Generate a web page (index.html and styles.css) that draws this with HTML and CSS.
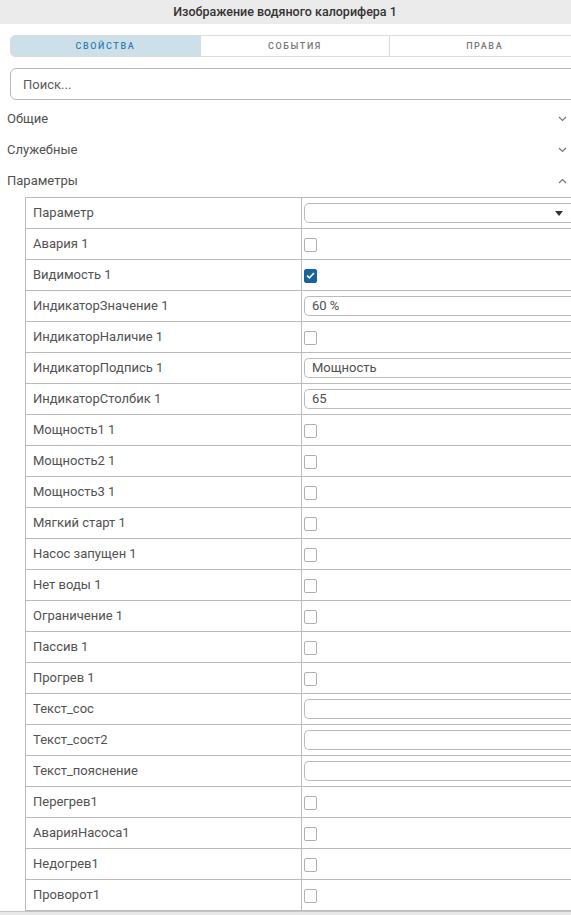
FILE: index.html
```html
<!DOCTYPE html>
<html lang="ru">
<head>
  <meta charset="UTF-8" />
  <meta name="viewport" content="width=device-width, initial-scale=1.0"/>
  <title>Изображение водяного калорифера 1</title>
  <link rel="stylesheet" href="styles.css">
</head>
<body>
  <div class="props-panel">
    <div class="panel-header">Изображение водяного калорифера 1</div>

    <div class="panel-tabs">
      <div class="tab active">Свойства</div>
      <div class="tab">События</div>
      <div class="tab">Права</div>
    </div>

    <div class="search-box">
      <input type="text" placeholder="Поиск..." />
    </div>

    <div class="groups">
      <div class="group">
        <span>Общие</span>
        <svg class="chevron" width="9" height="6" viewBox="0 0 9 6"><polyline points="1,1 4.5,4.5 8,1" /></svg>
      </div>
      <div class="group">
        <span>Служебные</span>
        <svg class="chevron" width="9" height="6" viewBox="0 0 9 6"><polyline points="1,1 4.5,4.5 8,1" /></svg>
      </div>
      <div class="group">
        <span>Параметры</span>
        <svg class="chevron" width="9" height="6" viewBox="0 0 9 6"><polyline points="1,5 4.5,1.5 8,5" /></svg>
      </div>
    </div>

    <div class="param-table">
      <div class="param-row">
        <div class="param-name">Параметр</div>
        <div class="param-value">
          <div class="field select">
            <svg class="caret" width="8" height="5" viewBox="0 0 8 5"><polygon points="0,0 8,0 4,5" /></svg>
          </div>
        </div>
      </div>
      <div class="param-row">
        <div class="param-name">Авария 1</div>
        <div class="param-value"><span class="check"></span></div>
      </div>
      <div class="param-row">
        <div class="param-name">Видимость 1</div>
        <div class="param-value">
          <span class="check checked">
            <svg width="9" height="7" viewBox="0 0 9 7"><polyline points="1,3.6 3.4,5.8 8,1" /></svg>
          </span>
        </div>
      </div>
      <div class="param-row">
        <div class="param-name">ИндикаторЗначение 1</div>
        <div class="param-value"><div class="field">60 %</div></div>
      </div>
      <div class="param-row">
        <div class="param-name">ИндикаторНаличие 1</div>
        <div class="param-value"><span class="check"></span></div>
      </div>
      <div class="param-row">
        <div class="param-name">ИндикаторПодпись 1</div>
        <div class="param-value"><div class="field">Мощность</div></div>
      </div>
      <div class="param-row">
        <div class="param-name">ИндикаторСтолбик 1</div>
        <div class="param-value"><div class="field">65</div></div>
      </div>
      <div class="param-row">
        <div class="param-name">Мощность1 1</div>
        <div class="param-value"><span class="check"></span></div>
      </div>
      <div class="param-row">
        <div class="param-name">Мощность2 1</div>
        <div class="param-value"><span class="check"></span></div>
      </div>
      <div class="param-row">
        <div class="param-name">Мощность3 1</div>
        <div class="param-value"><span class="check"></span></div>
      </div>
      <div class="param-row">
        <div class="param-name">Мягкий старт 1</div>
        <div class="param-value"><span class="check"></span></div>
      </div>
      <div class="param-row">
        <div class="param-name">Насос запущен 1</div>
        <div class="param-value"><span class="check"></span></div>
      </div>
      <div class="param-row">
        <div class="param-name">Нет воды 1</div>
        <div class="param-value"><span class="check"></span></div>
      </div>
      <div class="param-row">
        <div class="param-name">Ограничение 1</div>
        <div class="param-value"><span class="check"></span></div>
      </div>
      <div class="param-row">
        <div class="param-name">Пассив 1</div>
        <div class="param-value"><span class="check"></span></div>
      </div>
      <div class="param-row">
        <div class="param-name">Прогрев 1</div>
        <div class="param-value"><span class="check"></span></div>
      </div>
      <div class="param-row">
        <div class="param-name">Текст_сос</div>
        <div class="param-value"><div class="field"></div></div>
      </div>
      <div class="param-row">
        <div class="param-name">Текст_сост2</div>
        <div class="param-value"><div class="field"></div></div>
      </div>
      <div class="param-row">
        <div class="param-name">Текст_пояснение</div>
        <div class="param-value"><div class="field"></div></div>
      </div>
      <div class="param-row">
        <div class="param-name">Перегрев1</div>
        <div class="param-value"><span class="check"></span></div>
      </div>
      <div class="param-row">
        <div class="param-name">АварияНасоса1</div>
        <div class="param-value"><span class="check"></span></div>
      </div>
      <div class="param-row">
        <div class="param-name">Недогрев1</div>
        <div class="param-value"><span class="check"></span></div>
      </div>
      <div class="param-row">
        <div class="param-name">Проворот1</div>
        <div class="param-value"><span class="check"></span></div>
      </div>
    </div>

    <div class="panel-footer"></div>
  </div>
</body>
</html>
```

FILE: styles.css
```css
html, body {
  margin: 0;
  overflow: hidden;
  background: #fff;
}
body {
  font-family: Roboto, 'Liberation Sans', Arial, sans-serif;
  color: #505050;
}
.props-panel {
  width: 590px;
}
.panel-header {
  height: 24px;
  line-height: 24px;
  background: #ebebeb;
  text-align: center;
  padding-right: 20px;
  font-size: 12.5px;
  font-weight: 500;
  color: #333;
}
.panel-tabs {
  display: flex;
  margin: 11px 10px 0 10px;
  height: 20px;
  border: 1px solid #dcdcdc;
  border-radius: 5px 0 0 5px;
  overflow: hidden;
}
.tab {
  flex: 1;
  text-align: center;
  line-height: 20px;
  font-size: 9px;
  font-weight: 500;
  letter-spacing: 1.6px;
  text-transform: uppercase;
  color: #777;
  border-left: 1px solid #dcdcdc;
}
.tab:first-child { border-left: none; }
.tab.active {
  background: #cde0ea;
  color: #3380ad;
}
.search-box {
  margin: 11px 10px 0 10px;
}
.search-box input {
  box-sizing: border-box;
  width: 100%;
  height: 32px;
  border: 1px solid #b8b8b8;
  border-radius: 6px;
  padding: 0 12px;
  font-family: inherit;
  font-size: 13px;
  color: #505050;
  outline: none;
}
.search-box input::placeholder { color: #5a5a5a; }
.groups {
  padding-top: 3px;
}
.group {
  display: flex;
  align-items: center;
  justify-content: space-between;
  height: 31px;
  padding: 0 23px 0 7px;
  font-size: 13px;
  color: #505050;
}
.chevron polyline {
  fill: none;
  stroke: #777;
  stroke-width: 1.2;
}
.param-table {
  margin: 1px 0 0 25px;
  border-top: 1px solid #bbb;
  border-left: 1px solid #bbb;
}
.param-row {
  display: flex;
  height: 30px;
  border-bottom: 1px solid #bbb;
}
.param-name {
  width: 268px;
  padding-left: 7px;
  border-right: 1px solid #bbb;
  line-height: 30px;
  font-size: 13px;
  color: #525252;
}
.param-value {
  flex: 1;
  display: flex;
  align-items: center;
  padding-left: 2px;
}
.field {
  box-sizing: border-box;
  flex: 1;
  height: 20px;
  line-height: 18px;
  border: 1px solid #bbb;
  border-right: none;
  border-radius: 5px 0 0 5px;
  padding-left: 7px;
  font-size: 13px;
  color: #505050;
}
.field.select {
  position: relative;
  border-right: 1px solid #bbb;
  border-radius: 5px;
}
.caret {
  position: absolute;
  left: 250px;
  top: 7px;
  fill: #333;
}
.check {
  box-sizing: border-box;
  display: inline-flex;
  align-items: center;
  justify-content: center;
  width: 13px;
  height: 14px;
  border: 1.5px solid #b0b0b0;
  border-radius: 2px;
  margin-top: 1px;
}
.check.checked {
  background: #17649a;
  border-color: #17649a;
}
.check polyline {
  fill: none;
  stroke: #fff;
  stroke-width: 1.6;
}
.panel-footer {
  height: 6px;
  background: #e8e8e8;
  border-top: 1px solid #c4c4c4;
}
```
